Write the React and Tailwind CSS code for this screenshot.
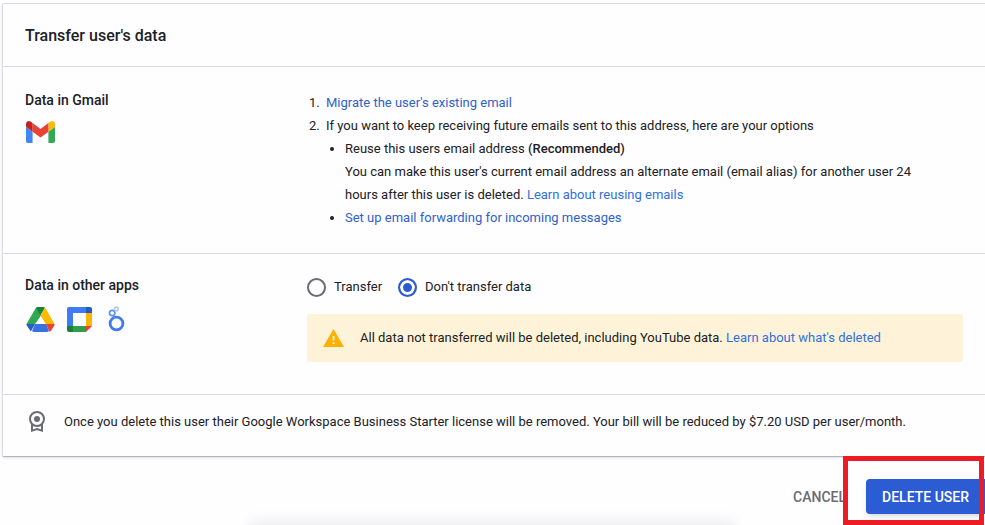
import React, { useState } from "react";

function GmailIcon() {
  return (
    <svg viewBox="52 42 88 66" className="h-[22px] w-[29px]" aria-label="Gmail">
      <path fill="#4285f4" d="M58 108h14V74L52 59v43c0 3.32 2.69 6 6 6" />
      <path fill="#34a853" d="M120 108h14c3.32 0 6-2.69 6-6V59l-20 15" />
      <path fill="#fbbc04" d="M120 48v26l20-15v-8c0-7.42-8.47-11.65-14.4-7.2" />
      <path fill="#ea4335" d="M72 74V48l24 18 24-18v26L96 92" />
      <path fill="#c5221f" d="M52 51v8l20 15V48l-5.600-4.200c-5.940-4.450-14.400-.220-14.400 7.200" />
    </svg>
  );
}

function DriveIcon() {
  return (
    <svg viewBox="0 0 29 25" className="h-[25px] w-[29px]" aria-label="Drive">
      <path fill="#2da94f" d="M.5 17 9.500 1.500Q10.400 0 12 0l3 8.500L9 17z" />
      <path fill="#188038" d="M10 .7Q11 0 12 0h5q1.200 0 2 .8L14.500 8.200z" />
      <path fill="#ffba00" d="M19 .8q.5.500 1 1.200L28.500 17h-8.700L14.500 8.200z" />
      <path fill="#3871e0" d="M9 17h11l3 7q-1 1-2.500 1h-12Q7 25 6 24.200z" />
      <path fill="#2a5dc4" d="M.5 17H9l-4 7.300q-.8-.5-1.300-1.500L.7 18.500Q.4 17.700.5 17z" />
      <path fill="#ea4335" d="M19.800 17h8.700q.2.800-.3 1.700l-3 4.700q-.6 1-1.700 1.300z" />
    </svg>
  );
}

function CalendarIcon() {
  return (
    <svg viewBox="0 0 25 25" className="h-[25px] w-[25px]" aria-label="Calendar">
      <path fill="#3f7af0" d="M2 0h17v6H6v13H0V2q0-2 2-2z" />
      <path fill="#1f5bc9" d="M19 0h4q2 0 2 2v4h-6z" />
      <path fill="#fbb604" d="M19 6h6v13h-6z" />
      <path fill="#2f9e4d" d="M6 19h13v6H6z" />
      <path fill="#188038" d="M0 19h6v6H2q-2 0-2-2z" />
      <path fill="#ea4335" d="M19 19h6l-6 6z" />
    </svg>
  );
}

function LookerIcon() {
  return (
    <svg viewBox="0 0 17 26" className="h-[26px] w-[17px]" fill="none" aria-label="Looker Studio">
      <circle cx="8.500" cy="17.500" r="6.400" stroke="#3f7bea" strokeWidth="2.800" />
      <circle cx="4.200" cy="7" r="2.700" stroke="#5b93f0" strokeWidth="1.700" />
      <path d="m5.300 9.500 1.200 2.300" stroke="#5b93f0" strokeWidth="1.700" />
      <circle cx="8.400" cy="2.900" r="1.900" stroke="#a9c6f7" strokeWidth="1.400" />
    </svg>
  );
}

function WarningIcon() {
  return (
    <svg viewBox="0 0 21 18" className="h-[18px] w-[21px] shrink-0" aria-hidden="true">
      <path fill="#fbb104" d="M10.500 0 21 18H0z" />
      <path fill="#fff4d6" d="M9.600 7h1.900v4.500H9.600zM9.600 13.200h1.900v1.900H9.600z" />
    </svg>
  );
}

function LicenseIcon() {
  return (
    <svg viewBox="0 0 16 21" className="h-[21px] w-4 shrink-0" fill="none" aria-hidden="true">
      <circle cx="8" cy="8" r="7" stroke="#6b6c6f" strokeWidth="2" />
      <circle cx="8" cy="8" r="3" fill="#6b6c6f" />
      <path d="M3 13v6.600l5-1.500 5 1.500V13" stroke="#6b6c6f" strokeWidth="2" />
    </svg>
  );
}

function Link({ children, learn }) {
  return (
    <a href="#" className={learn ? "text-[#3071dc] hover:underline" : "text-[#2f62c8] hover:underline"}>
      {children}
    </a>
  );
}

function Radio({ label, value, selected, onChange }) {
  return (
    <label className="flex items-center gap-2">
      <input
        type="radio"
        name="transfer"
        value={value}
        checked={selected === value}
        onChange={() => onChange(value)}
        className="h-[19px] w-[19px] appearance-none rounded-full border-2 border-[#6b6c6f] checked:border-[#2b5cd3] checked:bg-[#2b5cd3] checked:shadow-[inset_0_0_0_3px_#fefdff]"
      />
      {label}
    </label>
  );
}

export default function App() {
  const [transfer, setTransfer] = useState("none");

  return (
    <div className="relative min-h-screen overflow-hidden bg-[#fefdff] pt-[3px] font-['Roboto',sans-serif] text-[13px] text-[#202124]">
      <main className="ml-[2px] rounded-l-xs border-y border-l border-t-[#dcdcdf] border-b-[#b4b5b8] border-l-[#dcdcdf] shadow-sm">
        <header className="border-b border-[#dcdcdf] px-[22px] pt-[21px] pb-[19px]">
          <h1 className="text-base leading-[22px] font-medium">Transfer user's data</h1>
        </header>

        <section className="grid grid-cols-[282px_1fr] border-b border-[#dcdcdf] px-[22px] py-6">
          <div>
            <h2 className="text-sm leading-[18px] font-medium">Data in Gmail</h2>
            <div className="mt-3 px-px">
              <GmailIcon />
            </div>
          </div>
          <ol className="list-decimal pr-5 pl-4 leading-[23px]">
            <li className="pl-[3px]">
              <Link>Migrate the user's existing email</Link>
            </li>
            <li className="pl-[3px]">
              If you want to keep receiving future emails sent to this address, here are your options
              <ul className="list-disc pl-[19px]">
                <li>
                  Reuse this users email address <span className="font-medium">(Recommended)</span>
                  <br />
                  You can make this user's current email address an alternate email (email alias) for another user 24
                  hours after this user is deleted. <Link learn>Learn about reusing emails</Link>
                </li>
                <li>
                  <Link>Set up email forwarding for incoming messages</Link>
                </li>
              </ul>
            </li>
          </ol>
        </section>

        <section className="grid grid-cols-[282px_1fr] border-b border-[#dcdcdf] px-[22px] pt-[22px] pb-8">
          <div>
            <h2 className="text-sm leading-[18px] font-medium">Data in other apps</h2>
            <div className="mt-3 flex items-center gap-3 px-px">
              <DriveIcon />
              <CalendarIcon />
              <span className="pl-1">
                <LookerIcon />
              </span>
            </div>
          </div>
          <div>
            <div className="flex gap-4 leading-[22px]">
              <Radio label="Transfer" value="transfer" selected={transfer} onChange={setTransfer} />
              <Radio label="Don't transfer data" value="none" selected={transfer} onChange={setTransfer} />
            </div>
            <div className="mt-4 flex items-center gap-4 rounded-xs bg-[#fef3d9] px-4 py-[14px] leading-5">
              <WarningIcon />
              <p>
                All data not transferred will be deleted, including YouTube data.{" "}
                <Link learn>Learn about what's deleted</Link>
              </p>
            </div>
          </div>
        </section>

        <section className="flex items-center gap-[19px] px-[26px] pt-4 pb-6 leading-5">
          <LicenseIcon />
          <p>
            Once you delete this user their Google Workspace Business Starter license will be removed. Your bill will be
            reduced by $7.20 USD per user/month.
          </p>
        </section>
      </main>

      <footer className="mt-[22px] flex justify-end text-sm">
        <button type="button" className="px-5 font-medium text-[#6b6c6f]">
          CANCEL
        </button>
        <button type="button" className="h-[35px] rounded-l-sm bg-[#2b5cd3] px-4 font-medium text-white shadow-md">
          DELETE USER
        </button>
      </footer>

      {/* highlight over the delete button */}
      <div className="pointer-events-none absolute right-px bottom-0 h-[69px] w-[141px] border-5 border-[#ed1c24]" />
      {/* soft shadow of the sheet below the fold */}
      <div className="pointer-events-none absolute inset-x-[26%] -bottom-3 h-2 rounded-full shadow-[0_0_14px_8px_#ececee]" />
    </div>
  );
}
